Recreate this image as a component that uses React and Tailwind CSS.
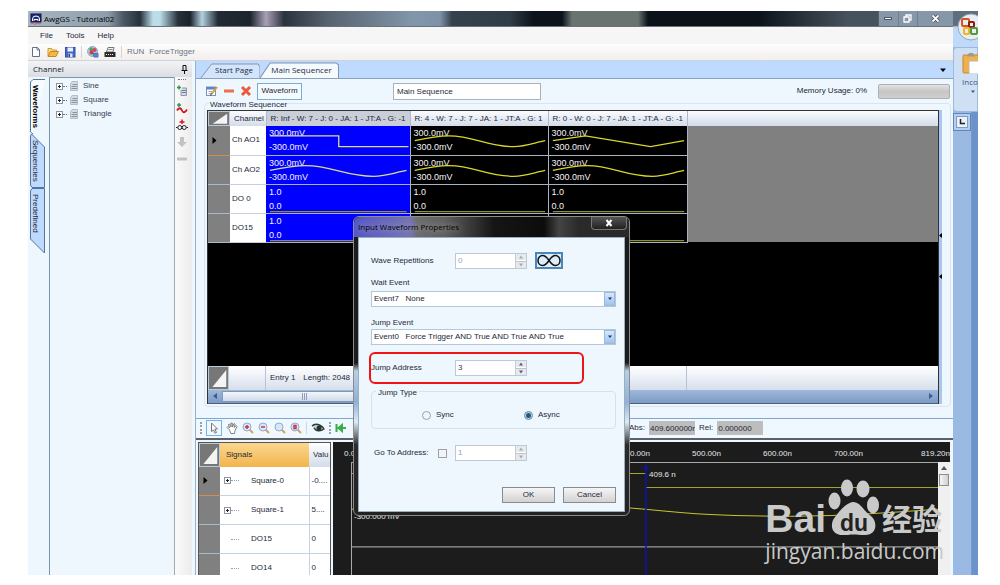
import { useState } from "react";

const sans = "font-['Liberation_Sans',Arial,sans-serif]";
const ui = "font-['Open_Sans','Noto_Sans',sans-serif]";

const SINE = "M4 15 C 22 11, 32 10, 40 10 C 66 10, 80 21, 108 21 C 120 21, 130 17, 141 15";
const waves = {
  square: "M4 10 H73 V21 H143",
  sine: SINE,
  triangle: "M4 15 L38 10 L106 21 L141 15",
  low: "M4 27.5 H141",
};

const rows = [
  { name: "Ch AO1", high: "300.0mV", low: "-300.0mV", shapes: ["square", "sine", "triangle"] },
  { name: "Ch AO2", high: "300.0mV", low: "-300.0mV", shapes: ["sine", "sine", "sine"] },
  { name: "DO 0", high: "1.0", low: "0.0", shapes: ["low", "low", "low"] },
  { name: "DO15", high: "1.0", low: "0.0", shapes: ["low", "low", "low"] },
];

const signals = [
  { name: "Square-0", value: "-0....", expand: true },
  { name: "Square-1", value: "5....", expand: true },
  { name: "DO15", value: "0" },
  { name: "DO14", value: "0" },
];

const AppIcon = () => (
  <svg viewBox="0 0 12 12" className="w-3 h-3">
    <rect x="1" y="1" width="10" height="8" fill="#1d2b7c" stroke="#0d1440" />
    <path d="M2.500 8V6A3.500 3 0 0 1 9.500 6V8M4 8V6.500H8V8" stroke="#fff" fill="none" />
    <path d="M1 11l2-1 2 1.500 2-1.500 2 1 2-1" stroke="#d4586a" fill="none" />
  </svg>
);

const PageIcon = () => (
  <svg viewBox="0 0 12 12" className="w-3 h-3">
    <path d="M2.500 1.500H7.500L9.500 3.500V10.500H2.500Z" fill="#fff" stroke="#60708f" />
    <path d="M7 1.500V4H9.500" fill="none" stroke="#60708f" />
  </svg>
);

const FolderIcon = () => (
  <svg viewBox="0 0 12 12" className="w-3 h-3">
    <path d="M1 10V2.500H4.500L5.500 4H9.500V5.500" fill="#f8d87b" stroke="#c99b3f" />
    <path d="M1 10.500L3.500 5.500H11.500L9 10.500Z" fill="#f5b942" stroke="#c08a2c" />
  </svg>
);

const SaveIcon = () => (
  <svg viewBox="0 0 12 12" className="w-3 h-3">
    <rect x="1.500" y="1.500" width="9.500" height="9.500" fill="#4468c8" stroke="#3450a8" />
    <rect x="3.500" y="1.500" width="5.500" height="4" fill="#e9efff" />
    <rect x="4" y="7.500" width="4.500" height="3.500" fill="#dde4f4" />
    <rect x="4.500" y="8" width="1.500" height="3" fill="#253a8e" />
  </svg>
);

const GlobeIcon = () => (
  <svg viewBox="0 0 12 12" className="w-3 h-3">
    <circle cx="5.500" cy="5.500" r="5" fill="#a9c6df" stroke="#8fabc6" />
    <path d="M2 3l3-2 1 3-2 2z" fill="#4aa04b" />
    <circle cx="4.500" cy="6.500" r="2" fill="#d23c3c" />
    <circle cx="7.500" cy="4" r="2" fill="#cf4760" />
    <path d="M6 7.500h5v3.500H7z" fill="#5a88cb" stroke="#4a75b5" />
  </svg>
);

const DeviceIcon = () => (
  <svg viewBox="0 0 12 12" className="w-3 h-3">
    <path d="M2.500 6L4 1.500H10L9 6Z" fill="#f2f2f2" stroke="#777" />
    <path d="M4.500 3.500H8.500" stroke="#888" />
    <rect x=".5" y="6" width="11" height="5" fill="#2c2c2c" />
    <path d="M2 8.500H10" stroke="#eee" strokeDasharray="1 1" />
  </svg>
);

const ListIcon = () => (
  <svg viewBox="0 0 10 12" className="w-2.5 h-3">
    <path d="M3 1.500H8.500V10.500H1.500V4Z" fill="#d3dbe4" stroke="#b4bdc8" />
    <path d="M3.500 4.500H8M2.500 6.500H8M2.500 8.500H8" stroke="#8893a0" />
  </svg>
);

const EditIcon = () => (
  <svg viewBox="0 0 12 12" className="w-3 h-3">
    <rect x=".5" y="2" width="9" height="8.500" fill="#fff" stroke="#7b95b8" />
    <rect x=".5" y="2" width="9" height="2.500" fill="#5a86c4" />
    <path d="M2.500 6.500H6M2.500 8.500H5" stroke="#9aa8b8" />
    <path d="M5.500 9L11 2" stroke="#d99b35" strokeWidth="2" />
    <path d="M4.500 10.500L5.500 8.500" stroke="#333" />
  </svg>
);

const PanIcon = () => (
  <svg viewBox="0 0 12 12" className="w-3 h-3">
    <path
      d="M3.500 8L1 5.500L2 4.500L3.500 6L2.500 2.500L3.500 2L5 5L5 1H6.200L6.500 5L8 1.500L9 2L8.300 5.500L10.200 3.500L11 4.500L9 8.500L8.500 11.500H5Z"
      fill="#fff"
      stroke="#666"
      strokeWidth=".8"
    />
  </svg>
);

const ZoomIcon = ({ mark }) => (
  <svg viewBox="0 0 12 12" className="w-3 h-3">
    <path d="M7.500 7.500L11 11" stroke="#d9a05c" strokeWidth="2" />
    <circle cx="5" cy="5" r="4" fill="#d3e8fa" stroke="#94aac8" />
    {mark && <path d={mark} stroke="#c92c4a" strokeWidth="1.400" fill="none" />}
  </svg>
);

const Expander = () => (
  <svg viewBox="0 0 7 7" className="w-[7px] h-[7px] shrink-0">
    <rect x=".5" y=".5" width="6" height="6" fill="#fff" stroke="#8c96a2" />
    <path d="M2 3.500H5M3.500 2V5" stroke="#222" />
  </svg>
);

const Corner = () => (
  <svg viewBox="0 0 22 22" preserveAspectRatio="none" className="block w-full h-full border border-[#b9cadb] bg-[#777]">
    <path d="M20 3V20H4Z" fill="#f4f4f4" />
  </svg>
);

const Sep = () => <span className="w-px h-3 bg-gray-300 shrink-0" />;

const Spinner = ({ id, label, value, disabled, onChange }) => (
  <div className="flex w-[72px] h-4 border border-[#bfc9d4] bg-white">
    <input
      id={id}
      aria-label={label}
      type="text"
      value={value}
      disabled={disabled}
      onChange={(e) => onChange(e.target.value)}
      className="flex-1 min-w-0 px-0.5 text-[8px] leading-3 text-gray-700 disabled:text-gray-400 outline-none"
    />
    <div className="flex flex-col w-[11px] bg-[#e6e9ed] border-l border-[#c8ccd2]">
      <button type="button" aria-label="Increase" className="flex-1 flex items-center justify-center border-b border-white">
        <svg viewBox="0 0 6 4" className="w-1.5 h-1"><path d="M1 3.500L3 .5L5 3.500Z" fill={disabled ? "#a9a9a9" : "#555e80"} /></svg>
      </button>
      <button type="button" aria-label="Decrease" className="flex-1 flex items-center justify-center border-t border-[#bfc3c8]">
        <svg viewBox="0 0 6 4" className="w-1.5 h-1"><path d="M1 .5L3 3.500L5 .5Z" fill={disabled ? "#a9a9a9" : "#555e80"} /></svg>
      </button>
    </div>
  </div>
);

const Combo = ({ id, option }) => (
  <div className="relative h-4">
    <select id={id} className="w-full h-4 appearance-none border border-[#b5c7da] bg-white pl-0.5 text-[8px] leading-3 text-gray-800 outline-none">
      <option>{option}</option>
    </select>
    <span className="pointer-events-none absolute right-px top-px bottom-px w-[11px] bg-linear-to-b from-[#d6e8fc] to-[#9fc3ee] border border-[#9bb9dc] flex items-center justify-center">
      <svg viewBox="0 0 6 4" className="w-1.5 h-1"><path d="M1 .5L3 3L5 .5Z" fill="#26355c" /></svg>
    </span>
  </div>
);

const TitleBar = () => (
  <div className="flex h-4 shrink-0 items-center border-b border-[#6b737a] bg-[linear-gradient(90deg,#a8b6c2_0px,#8d9dab_80px,#4c5964_95px,#26313a_112px,#bcdcea_125px,#bcdcea_132px,#26313a_150px,#1a222a_162px,#b4d0e0_174px,#222b34_190px,#1c242c_222px,#aaa0b8_238px,#2a333c_256px,#56626f_300px,#8296ab_385px,#7d92a8_412px,#35424d_424px,#303c46_482px,#0c131b_505px,#0c131b_534px,#69736f_544px,#69736f_610px,#0b121a_620px,#0b121a_730px,#46525c_820px)]">
    <span className="ml-0.5"><AppIcon /></span>
    <h1 className={`${ui} ml-0.5 text-[8px] text-black`}>AwgGS - Tutorial02</h1>
    <div className="ml-auto flex h-full w-[75px] bg-[#8597a8] text-white">
      <button type="button" aria-label="Minimize" className="flex-1 flex items-center justify-center border-l border-[#52606d]">
        <span className="w-2 h-[3px] bg-white border border-[#4d5965]" />
      </button>
      <button type="button" aria-label="Restore" className="flex-1 flex items-center justify-center border-l border-[#6f7f8e]">
        <svg viewBox="0 0 9 9" className="w-[9px] h-[9px]"><path d="M3 3V1H8V6H6M1 3H6V8H1Z" stroke="#fff" fill="none" strokeWidth="1.300" /></svg>
      </button>
      <button type="button" aria-label="Close" className="w-9 flex items-center justify-center border-l border-[#6f7f8e]">
        <svg viewBox="0 0 9 9" className="w-[9px] h-[9px]">
          <path d="M1.500 1.500L7.500 7.500M7.500 1.500L1.500 7.500" stroke="#3f4a55" strokeWidth="3.200" />
          <path d="M1.500 1.500L7.500 7.500M7.500 1.500L1.500 7.500" stroke="#fff" strokeWidth="1.800" />
        </svg>
      </button>
    </div>
  </div>
);

const Sidebar = () => (
  <aside className="flex w-[164px] shrink-0 flex-col bg-[#eef6fe]">
    <div className="flex h-4 shrink-0 items-center justify-between bg-linear-to-b from-[#f3f4f6] to-[#dadde2] pl-[5px] pr-1">
      <h2 className={`${ui} text-[8px] text-gray-900`}>Channel</h2>
      <svg viewBox="0 0 7 9" className="w-[7px] h-[9px]"><path d="M2 .5H5V5M2 .5V5M.5 5.500H6.500M3.500 5.500V9" stroke="#111" fill="none" /></svg>
    </div>
    <div className="flex min-h-0 flex-1">
      <nav className="flex w-[21px] shrink-0 flex-col pl-0.5 pt-0.5 text-[8px] leading-[10px]">
        <button type="button" className="relative h-[55px] w-[15px]">
          <svg viewBox="0 0 15 55" className="absolute inset-0 w-full h-full"><path d="M15 .5H3L.5 3V53L3 55" fill="#f7fbff" stroke="#54759c" /></svg>
          <span className="relative block mx-auto font-bold text-black [writing-mode:vertical-rl]">Waveforms</span>
        </button>
        <button type="button" className="relative h-[54px] w-[15px]">
          <svg viewBox="0 0 15 54" className="absolute inset-0 w-full h-full"><path d="M1.500 0L14.500 13V53.500H2L.5 51V2Z" fill="#bfdaff" stroke="#54759c" /></svg>
          <span className="relative block mx-auto text-gray-800 [writing-mode:vertical-rl]">Sequencies</span>
        </button>
        <button type="button" className="relative h-[66px] w-[15px]">
          <svg viewBox="0 0 15 66" className="absolute inset-0 w-full h-full"><path d="M14.500 .5H2L.5 3V51L14.500 65Z" fill="#bfdaff" stroke="#54759c" /></svg>
          <span className="relative block mx-auto mb-4 text-gray-800 [writing-mode:vertical-rl]">Predefined</span>
        </button>
      </nav>
      <ul className="flex-1 border-l border-t border-[#7d94ad] px-1.5 pt-px text-[8px] text-gray-700">
        {["Sine", "Square", "Triangle"].map((name) => (
          <li key={name} className="flex h-[14px] items-center">
            <Expander />
            <span className="mr-0.5 w-1 border-t border-dotted border-gray-500" />
            <ListIcon />
            <span className="ml-1">{name}</span>
          </li>
        ))}
      </ul>
      <div className="flex w-[18px] shrink-0 flex-col items-center gap-[5px] border-l border-[#a3a9af] bg-linear-to-r from-[#fafafa] to-[#ececec] pr-1">
        <span className="mt-0.5 w-2 border-t border-dotted border-gray-500" />
        <button type="button" aria-label="Add list">
          <svg viewBox="0 0 12 12" className="block w-3 h-3">
            <path d="M1 2.500H5M3 .5V4.500" stroke="#2c9a48" strokeWidth="1.500" />
            <path d="M6 3H10.500V10.500H5V5" fill="#d3dbe4" stroke="#8d98a6" />
            <path d="M6 5.500H10M6 7.500H10" stroke="#75808e" />
          </svg>
        </button>
        <button type="button" aria-label="Add waveform">
          <svg viewBox="0 0 12 12" className="block w-3 h-3">
            <path d="M1 3H5M3 1V5" stroke="#2c9a48" strokeWidth="1.500" />
            <path d="M1 8.500C3 5 5 6 6 8.500S9 11 11 7.500" stroke="#d01423" strokeWidth="1.800" fill="none" />
          </svg>
        </button>
        <button type="button" aria-label="Add loop">
          <svg viewBox="0 0 12 12" className="block w-3 h-3">
            <path d="M3.500 3H8.500M6 .5V5" stroke="#e01020" strokeWidth="1.500" />
            <path d="M0 8.500H1.500M10.500 8.500H12" stroke="#222" />
            <circle cx="3.800" cy="8.500" r="2" fill="none" stroke="#222" />
            <circle cx="8.200" cy="8.500" r="2" fill="none" stroke="#222" />
          </svg>
        </button>
        <button type="button" aria-label="Move down">
          <svg viewBox="0 0 12 12" className="block w-3 h-3"><path d="M4 1H8V6H11L6 11L1 6H4Z" fill="#c2c2c2" /></svg>
        </button>
        <button type="button" aria-label="Remove">
          <svg viewBox="0 0 12 12" className="block w-3 h-3"><path d="M1 4.500H11V7.500H1Z" fill="#c2c2c2" /></svg>
        </button>
      </div>
    </div>
  </aside>
);

const WaveCell = ({ row, shape, active }) => (
  <td className={`relative p-0 border-r border-b border-[#a9b2bd] ${active ? "bg-[#0000fe]" : "bg-black"}`}>
    <div className="flex h-7 flex-col justify-between pl-[3px] text-[9px] leading-[14px] text-gray-100">
      <span>{row.high}</span>
      <span>{row.low}</span>
    </div>
    <svg viewBox="0 0 144 29" preserveAspectRatio="none" className="absolute inset-0 w-full h-full">
      <path d={waves[shape]} fill="none" stroke={shape === "low" ? "#8f8f30" : active ? "#dcdc9a" : "#d8d82c"} strokeWidth="1.300" />
    </svg>
  </td>
);

const Sequencer = () => (
  <div className="min-w-0 flex-1 border-x border-t border-[#333] bg-black">
    <table className="w-full table-fixed border-collapse text-left text-[8px]">
      <colgroup>
        <col className="w-[22px]" />
        <col className="w-[36px]" />
        <col className="w-[144px]" />
        <col className="w-[138px]" />
        <col className="w-[139px]" />
        <col />
      </colgroup>
      <thead>
        <tr className="h-[15px] bg-linear-to-b from-[#fbfcfe] to-[#d3dcea] text-gray-800">
          <th className="h-[15px] p-0"><div className="h-[15px]"><Corner /></div></th>
          <th className="p-0 pl-1 font-normal">Channel</th>
          <th className="overflow-hidden whitespace-nowrap border-x border-[#aeb9c9] bg-[#c9ced8] p-0 pl-1 font-normal">R: Inf - W: 7 - J: 0 - JA: 1 - JT:A - G: -1</th>
          <th className="overflow-hidden whitespace-nowrap border-r border-[#aeb9c9] p-0 pl-1 font-normal">R: 4 - W: 7 - J: 7 - JA: 1 - JT:A - G: 1</th>
          <th className="overflow-hidden whitespace-nowrap border-r border-[#aeb9c9] p-0 pl-1 font-normal">R: 0 - W: 0 - J: 7 - JA: 1 - JT:A - G: -1</th>
          <th className="p-0" />
        </tr>
      </thead>
      <tbody>
        {rows.map((row, i) => (
          <tr key={row.name} className="h-[29px]">
            <td className={`bg-[#808080] p-0 pl-1 border-b ${i === 0 ? "border-[#d88a48]" : "border-[#a9b9c9]"}`}>
              {i === 0 && <svg viewBox="0 0 5 7" className="w-[5px] h-[7px]"><path d="M.5 0L4.500 3.500L.5 7Z" fill="#000" /></svg>}
            </td>
            <th className="border-b border-[#c5d0dc] bg-white p-0 pl-0.5 font-normal text-gray-800">{row.name}</th>
            {row.shapes.map((shape, n) => (
              <WaveCell key={n} row={row} shape={shape} active={n === 0} />
            ))}
            <td className="bg-[#808080] p-0" />
          </tr>
        ))}
      </tbody>
    </table>
    <div className="h-[123px]" />
    <div className="flex h-6 bg-linear-to-b from-white to-[#d6dfec] text-[8px] text-gray-800">
      <div className="w-[21px]"><Corner /></div>
      <div className="w-[37px] border-r border-[#b7c2d2]" />
      <div className="flex flex-1 items-center gap-2 pl-1">
        <span>Entry 1</span>
        <span>Length: 2048</span>
      </div>
      <div className="w-[252px] border-l border-[#b7c2d2]" />
    </div>
    <div className="flex h-[14px] items-center border-b border-[#50607a] bg-linear-to-b from-[#9fb8d8] to-[#7c9bc4]">
      <svg viewBox="0 0 14 12" className="w-[14px] h-3"><path d="M9 3V9L5 6Z" fill="#3e5c8c" /></svg>
      <div className="flex h-[11px] w-[165px] items-center justify-center gap-px border border-[#8198b8] bg-linear-to-b from-[#f4f7fb] to-[#cfdaea]">
        {[0, 1, 2].map((n) => <span key={n} className="w-px h-[7px] bg-[#8ea0bb]" />)}
      </div>
      <svg viewBox="0 0 14 12" className="ml-auto w-[14px] h-3"><path d="M5 3V9L9 6Z" fill="#3e5c8c" /></svg>
    </div>
  </div>
);

const SequencerPage = () => (
  <section className="flex shrink-0 flex-col bg-[#eef6fe]">
    <div className="flex h-[18px] shrink-0 items-end border-b border-[#8aa0bb] bg-[#bfdaff] text-[8px] text-gray-800">
      <button type="button" className={`${ui} relative ml-1 h-4 w-[60px] pl-2`}>
        <svg viewBox="0 0 62 16" preserveAspectRatio="none" className="absolute inset-0 w-full h-full"><path d="M1 16L12 2H60L62 5V16" fill="#d3e5fc" stroke="#7f95b0" /></svg>
        <span className="relative">Start Page</span>
      </button>
      <button type="button" className={`${ui} relative h-4 w-[79px] pl-1`}>
        <svg viewBox="0 0 78 17" preserveAspectRatio="none" className="absolute inset-0 w-full h-full"><path d="M0 17L10 1H75L77.500 3V17" fill="#f5faff" stroke="#7f95b0" /></svg>
        <span className="relative">Main Sequencer</span>
      </button>
      <button type="button" aria-label="Window list" className="ml-auto mr-1 h-4 w-3 flex items-center justify-center">
        <svg viewBox="0 0 6 4" className="w-1.5 h-1"><path d="M0 .5H6L3 4Z" fill="#000" /></svg>
      </button>
    </div>
    <div className="flex h-6 shrink-0 items-center gap-[5px] pl-2.5 pr-[3px] text-[8px] text-gray-800">
      <button type="button" aria-label="Edit"><EditIcon /></button>
      <button type="button" aria-label="Remove entry">
        <svg viewBox="0 0 12 12" className="w-3 h-3"><path d="M1 4.500H11V7.500H1Z" fill="#ef7051" /></svg>
      </button>
      <button type="button" aria-label="Delete">
        <svg viewBox="0 0 12 12" className="w-3 h-3"><path d="M2 2L10 10M10 2L2 10" stroke="#ea5a3f" strokeWidth="3" /></svg>
      </button>
      <button type="button" className="h-[17px] w-[45px] border border-[#78add8] bg-[#f5faff]">Waveform</button>
      <input
        aria-label="Sequence name"
        defaultValue="Main Sequence"
        className="ml-[86px] h-[17px] w-[148px] border border-[#a9b1ba] bg-white px-[3px] outline-none"
      />
      <label htmlFor="memory" className="ml-auto mr-1.5">Memory Usage: 0%</label>
      <div id="memory" role="progressbar" aria-valuenow="0" className="h-[15px] w-[72px] rounded-xs border border-[#b0b0b0] bg-linear-to-b from-[#e2e2e2] via-[#c6c6c6] to-[#cecece]" />
    </div>
    <fieldset className="relative mb-[11px] ml-2 mr-0.5 rounded-sm border border-[#dbe4ee] pb-0.5 pl-0.5 pr-2 pt-1.5">
      <legend className="absolute -top-1 left-1 bg-[#eef6fe] px-px text-[8px] leading-[9px] text-gray-800">Waveform Sequencer</legend>
      <div className="flex">
        <Sequencer />
        <div className="flex w-[3px] flex-col gap-9 bg-[#a9c6ec] pt-[123px]">
          <svg viewBox="0 0 3 5" className="w-[3px] h-[5px]"><path d="M3 0V5L0 2.500Z" /></svg>
          <svg viewBox="0 0 3 5" className="w-[3px] h-[5px]"><path d="M3 0V5L0 2.500Z" /></svg>
        </div>
      </div>
    </fieldset>
  </section>
);

const CursorBar = () => (
  <div className="flex h-5 shrink-0 items-center gap-1 border-t border-[#7ea6d8] bg-[#eff7ff] pl-1 text-[8px] text-gray-800">
    <span className="h-3 border-l-2 border-dotted border-gray-400" />
    <button type="button" aria-label="Select" className="flex h-4 w-4 items-center justify-center border border-[#78b2e0]">
      <svg viewBox="0 0 12 12" className="w-3 h-3"><path d="M3.500 1L9.500 7H6.800L8.500 10.500L7 11.200L5.500 8L3.500 9.500Z" fill="#fff" stroke="#777" /></svg>
    </button>
    <button type="button" aria-label="Pan"><PanIcon /></button>
    <button type="button" aria-label="Zoom in"><ZoomIcon mark="M3 5H7M5 3V7" /></button>
    <button type="button" aria-label="Zoom out"><ZoomIcon mark="M3 5H7" /></button>
    <button type="button" aria-label="Zoom area"><ZoomIcon /></button>
    <button type="button" aria-label="Zoom reset"><ZoomIcon mark="M4 3.500H6V6.500H4Z" /></button>
    <Sep />
    <button type="button" aria-label="View">
      <svg viewBox="0 0 14 10" className="w-3.5 h-2.5">
        <path d="M1 3C4 0 10 1 13 6C9 9 5 8 3 5" fill="#c9d6ce" stroke="#2d3b3b" strokeWidth="1.400" />
        <circle cx="8" cy="5" r="2.500" fill="#233" />
      </svg>
    </button>
    <span className="h-3 border-l-2 border-dotted border-gray-400" />
    <button type="button" aria-label="Cursor to start">
      <svg viewBox="0 0 12 10" className="w-3 h-2.5"><path d="M1.500 1V9M11 5H5M7 2L3.500 5L7 8Z" stroke="#3bab4e" fill="#3bab4e" strokeWidth="2" /></svg>
    </button>
    <div className="ml-[278px] flex items-center gap-1">
      <label htmlFor="abs">Abs:</label>
      <input id="abs" readOnly value="409.600000n" className="h-[14px] w-[46px] bg-[#bdbdbd] pl-px outline-none" />
      <label htmlFor="rel">Rel:</label>
      <input id="rel" readOnly value="0.000000" className="h-[14px] w-[46px] bg-[#bdbdbd] pl-px outline-none" />
    </div>
  </div>
);

const Signals = () => (
  <div className="w-[133px] shrink-0 overflow-hidden border-x border-t border-[#555] bg-white">
    <table className="w-full table-fixed border-collapse text-left text-[8px] text-gray-800">
      <colgroup>
        <col className="w-[21px]" />
        <col />
        <col className="w-[21px]" />
      </colgroup>
      <thead>
        <tr className="h-6">
          <th className="p-0"><div className="h-6"><Corner /></div></th>
          <th className="bg-linear-to-b from-[#fbd78d] to-[#f2b44a] p-0 pl-1.5 font-normal">Signals</th>
          <th className="bg-linear-to-b from-white to-[#d3dcea] p-0 pl-1 font-normal">Valu</th>
        </tr>
      </thead>
      <tbody>
        {signals.map((s, i) => (
          <tr key={s.name} className="h-[29px]">
            <td className={`border-b bg-[#808080] p-0 pl-1 ${i === 0 ? "border-[#d88a48]" : "border-[#a9b9c9]"}`}>
              {i === 0 && <svg viewBox="0 0 5 7" className="w-[5px] h-[7px]"><path d="M.5 0L4.500 3.500L.5 7Z" fill="#000" /></svg>}
            </td>
            <td className="border-b border-r border-[#c3d3e6] p-0 pl-1">
              <div className="flex items-center">
                {s.expand ? <Expander /> : <span className="ml-[3px] h-px w-1" />}
                <span className="w-2 border-t border-dotted border-gray-400" />
                <span className="ml-3">{s.name}</span>
              </div>
            </td>
            <td className="border-b border-[#c3d3e6] p-0 pl-0.5">{s.value}</td>
          </tr>
        ))}
      </tbody>
    </table>
  </div>
);

const Watermark = () => (
  <div className="pointer-events-none absolute bottom-2.5 right-1.5 text-[#c9c9c9]">
    <div className="flex items-end">
      <span className="text-[39px] font-bold leading-9">Bai</span>
      <div className="relative mb-0.5 ml-0.5 h-14 w-[52px]">
        <svg viewBox="0 0 52 56" className="absolute inset-0 w-full h-full" fill="currentColor">
          <ellipse cx="6.500" cy="22" rx="6" ry="8.500" />
          <ellipse cx="19" cy="9" rx="6" ry="8.500" />
          <ellipse cx="35" cy="10" rx="6.500" ry="8.500" />
          <ellipse cx="45" cy="26" rx="6" ry="8.500" />
          <path d="M25 23C33 23 36 33 43 37C50 43 49 56 37 56C29 56 26 55 20 56C8 58 1 51 5 41C9 35 17 24 25 23Z" />
        </svg>
        <span className="absolute left-3 bottom-0 text-[23px] font-bold leading-6 text-[#222]">du</span>
      </div>
      <span className="ml-0.5 font-['Noto_Sans_CJK_SC',sans-serif] text-[30px] font-bold leading-10">经验</span>
    </div>
    <div className={`${ui} text-[21px] leading-7`}>jingyan.baidu.com</div>
  </div>
);

const Plot = () => (
  <div className="relative flex min-w-0 flex-1 flex-col bg-[#1c1c1c] text-[8px] text-gray-200">
    <div className="flex h-5 shrink-0 items-center overflow-hidden pt-1">
      <span className="w-[54px] pl-[11px]">0.00n</span>
      {["100.00n", "200.00n", "300.00n", "400.00n", "500.00n", "600.00n", "700.00n"].map((t) => (
        <span key={t} className="w-[71px] shrink-0 text-center">{t}</span>
      ))}
      <span className="ml-auto">819.20n</span>
    </div>
    <div className="flex min-h-0 flex-1 pl-[18px]">
      <div className="relative flex-1 overflow-hidden border-l border-t border-[#a8a8a8]">
        <svg viewBox="0 0 585 112" preserveAspectRatio="none" className="absolute inset-0 w-full h-full" fill="none">
          <path d="M0 83.500H585" stroke="#9a9a9a" />
          <path d="M0 10.500H293M293 24.500H585" stroke="#a5a528" />
          <path d="M0 46C60 36 100 32 146 32C200 32 240 43 293 46C340 51 370 53 440 53C500 53 540 49 585 46" stroke="#c4c42c" />
          <path d="M293.500 2V112M290 5H296" stroke="#1010b8" strokeWidth="1.500" />
        </svg>
        <span className="absolute left-[297px] top-1.5">409.6 n</span>
        <span className="absolute left-0.5 top-12">-300.000 mV</span>
      </div>
      <div className="flex w-3 shrink-0 flex-col items-center bg-[#f0f0f0]">
        <svg viewBox="0 0 12 12" className="w-3 h-3"><path d="M3 8L6 4L9 8Z" fill="#555" /></svg>
        <span className="h-3 w-2.5 border border-[#8f8f8f] bg-linear-to-r from-[#f5f5f5] to-[#cfcfcf]" />
      </div>
    </div>
    <Watermark />
  </div>
);

const Dialog = () => {
  const [repetitions, setRepetitions] = useState("0");
  const [address, setAddress] = useState("3");
  const [target, setTarget] = useState("1");
  const [sync, setSync] = useState(false);

  return (
    <div
      role="dialog"
      aria-label="Input Waveform Properties"
      className="absolute left-[353px] top-[216px] w-[277px] rounded-md border border-[#8c8c8c] bg-[linear-gradient(180deg,#1c1c1c_0px,#1c1c1c_146px,#b8cfe4_154px,#8fb0d8_185px,#dcebf6_205px,#2b2b2b_228px,#222_300px)] px-1 pb-[3px] text-[8px] text-gray-800"
    >
      <div className="-mx-1 flex h-5 items-start rounded-t-md bg-[linear-gradient(90deg,#5656c8_0px,#7474b4_56px,#6c6c6c_64px,#606060_90px,#343434_120px,#151515_140px,#0c0c0c_190px,#444_205px,#2a2a2a_225px,#2a2a2a_277px)] pl-1">
        <h2 className={`${ui} text-[8px] leading-5 text-black [text-shadow:0_0_6px_#bbb]`}>Input Waveform Properties</h2>
        <button type="button" aria-label="Close" className="ml-auto mr-0.5 flex h-[13px] w-9 items-center justify-center rounded-b-sm border border-t-0 border-[#777] bg-linear-to-b from-[#555] to-[#222]">
          <svg viewBox="0 0 8 8" className="w-2 h-2"><path d="M1.500 1L6.500 7M6.500 1L1.500 7" stroke="#fff" strokeWidth="2" /></svg>
        </button>
      </div>
      <form className="border border-[#9aaebb] bg-[#eef6fe] px-2 pb-2 pl-3 pt-[14px]" onSubmit={(e) => e.preventDefault()}>
        <div className="flex h-[17px] items-center">
          <label htmlFor="repetitions" className="w-[84px]">Wave Repetitions</label>
          <Spinner id="repetitions" value={repetitions} onChange={setRepetitions} disabled />
          <button type="button" aria-label="Infinite" className="ml-2 h-[17px] w-7 border-2 border-[#4a87b8] bg-[#dcecf8]">
            <svg viewBox="0 0 24 13" className="w-full h-full">
              <path d="M12 6.500C9 2 7 1.500 5.500 1.500A4.500 5 0 0 0 5.500 11.500C8 11.500 10 9.500 12 6.500S16 1.500 18.500 1.500A4.500 5 0 0 1 18.500 11.500C16 11.500 14 9.500 12 6.500Z" fill="none" stroke="#111" strokeWidth="1.500" />
            </svg>
          </button>
        </div>
        <label htmlFor="wait" className="mt-2 block leading-3">Wait Event</label>
        <div className="mt-0.5"><Combo id="wait" option={"Event7\u00a0\u00a0\u00a0None"} /></div>
        <label htmlFor="jump" className="mt-2.5 block leading-3">Jump Event</label>
        <div><Combo id="jump" option={"Event0\u00a0\u00a0\u00a0Force Trigger AND True AND True AND True"} /></div>
        <div className="-ml-0.5 mt-[7px] flex h-8 w-[215px] items-center rounded-md border-2 border-[#f01414]">
          <label htmlFor="address" className="w-[84px]">Jump Address</label>
          <Spinner id="address" value={address} onChange={setAddress} />
        </div>
        <fieldset className="relative mt-[7px] flex h-[38px] items-center rounded-sm border border-[#d8e1ea] pl-[50px] pt-2.5">
          <legend className="absolute -top-1 left-1 bg-[#eef6fe] px-0.5 leading-[9px]">Jump Type</legend>
          <label className="flex w-[102px] items-center gap-[5px]">
            <input type="radio" name="jumpType" checked={sync} onChange={() => setSync(true)} className="h-[9px] w-[9px] appearance-none rounded-full border border-gray-400 bg-gray-100 checked:bg-[#205a80] checked:ring-1 checked:ring-inset checked:ring-[#bcdcec]" />
            Sync
          </label>
          <label className="flex items-center gap-[5px]">
            <input type="radio" name="jumpType" checked={!sync} onChange={() => setSync(false)} className="h-[9px] w-[9px] appearance-none rounded-full border border-gray-400 bg-gray-100 checked:bg-[#205a80] checked:ring-1 checked:ring-inset checked:ring-[#bcdcec]" />
            Async
          </label>
        </fieldset>
        <div className="mt-4 flex h-4 items-center">
          <label htmlFor="goto" className="w-[67px] pl-[3px]">Go To Address:</label>
          <input id="goto" type="checkbox" className="mr-2 h-[9px] w-[9px] appearance-none border border-gray-400 bg-[#f3f3f3]" />
          <Spinner id="target" label="Target address" value={target} onChange={setTarget} disabled />
        </div>
        <div className="mt-[26px] flex justify-end gap-2">
          <button type="submit" className="h-4 w-[53px] border border-[#8b8b8b] bg-linear-to-b from-[#f6f6f6] to-[#d2d2d2]">OK</button>
          <button type="button" className="h-4 w-[53px] border border-[#8b8b8b] bg-linear-to-b from-[#f6f6f6] to-[#d2d2d2]">Cancel</button>
        </div>
      </form>
    </div>
  );
};

const OfficeEdge = () => (
  <aside className="flex w-[25px] shrink-0 flex-col overflow-hidden bg-linear-to-r from-[#9ab9e3] from-70% to-[#6b93c9] to-75%">
    <div className="h-9 shrink-0 bg-linear-to-b from-[#5f6e7c] from-40% to-[#bfdaf8] to-45% pl-1 pt-0.5">
      <svg viewBox="0 0 28 28" className="h-7 w-7">
        <circle cx="14" cy="14" r="13" fill="#e9edf2" stroke="#96a6ba" />
        <rect x="5" y="6" width="7" height="7" rx="1" fill="none" stroke="#d9541c" strokeWidth="2" />
        <rect x="12" y="9" width="5" height="5" rx="1" fill="none" stroke="#8c1d14" strokeWidth="2" />
        <rect x="7" y="15" width="5" height="6" rx="1" fill="none" stroke="#e9b824" strokeWidth="2" />
        <rect x="14" y="15" width="6" height="6" rx="1" fill="none" stroke="#4f9b3b" strokeWidth="2" />
      </svg>
    </div>
    <div className="flex h-[65px] shrink-0 flex-col rounded-l-sm border border-[#9db9dc] bg-[#cfe0f4] pl-2 pt-1">
      <svg viewBox="0 0 18 22" className="h-[22px] w-[18px]">
        <rect x="1" y="3" width="16" height="18" rx="1" fill="#f0b04a" stroke="#c58730" />
        <path d="M5 4.500H13L11 1H7Z" fill="#9a9a9a" />
        <rect x="7" y="9" width="11" height="13" fill="#fff" stroke="#b8b8b8" />
      </svg>
      <span className={`${ui} text-[8px] leading-4 text-[#3a5588]`}>Inco</span>
      <svg viewBox="0 0 6 4" className="ml-2 h-1 w-1.5"><path d="M1 .5H5L3 3Z" fill="#3a5588" /></svg>
    </div>
    <div className="mt-px flex h-[18px] w-[18px] shrink-0 items-center justify-center border border-[#5d86bf] bg-[#b7cdec]">
      <span className="flex h-3 w-3 items-center justify-center border border-[#7f9cc6] bg-[#e9f1fb]">
        <svg viewBox="0 0 6 6" className="h-1.5 w-1.5"><path d="M1.500 0V4.500H6" fill="none" stroke="#222" strokeWidth="1.500" /></svg>
      </span>
    </div>
  </aside>
);

export default function App() {
  return (
    <div className={`${sans} relative flex h-screen overflow-hidden bg-white pb-2.5 pl-7 pr-[22px] pt-[11px] leading-3`}>
      <div className="flex min-w-0 flex-1 flex-col bg-[#eef6fe]">
        <TitleBar />
        <nav className="flex h-[17px] shrink-0 items-center gap-[13px] bg-[#f6f6f6] pl-3 text-[8px] text-gray-800">
          <button type="button">File</button>
          <button type="button">Tools</button>
          <button type="button">Help</button>
        </nav>
        <div className="flex h-[17px] shrink-0 items-center gap-[5px] border-b border-[#cfd4da] bg-linear-to-b from-[#fdfdfd] to-[#f2efed] pl-0.5 text-[8px] text-gray-500">
          <button type="button" aria-label="New"><PageIcon /></button>
          <button type="button" aria-label="Open"><FolderIcon /></button>
          <button type="button" aria-label="Save"><SaveIcon /></button>
          <Sep />
          <button type="button" aria-label="Network"><GlobeIcon /></button>
          <button type="button" aria-label="Device"><DeviceIcon /></button>
          <Sep />
          <button type="button">RUN</button>
          <button type="button">ForceTrigger</button>
        </div>
        <div className="flex min-h-0 flex-1">
          <Sidebar />
          <main className="ml-[3px] flex min-w-0 flex-1 flex-col border-l border-[#9db0c6]">
            <SequencerPage />
            <CursorBar />
            <div className="flex min-h-0 flex-1 gap-0.5 border-t-2 border-[#5c6068] pl-0.5 pr-[3px] pt-0.5">
              <Signals />
              <Plot />
            </div>
          </main>
        </div>
      </div>
      <OfficeEdge />
      <Dialog />
    </div>
  );
}
